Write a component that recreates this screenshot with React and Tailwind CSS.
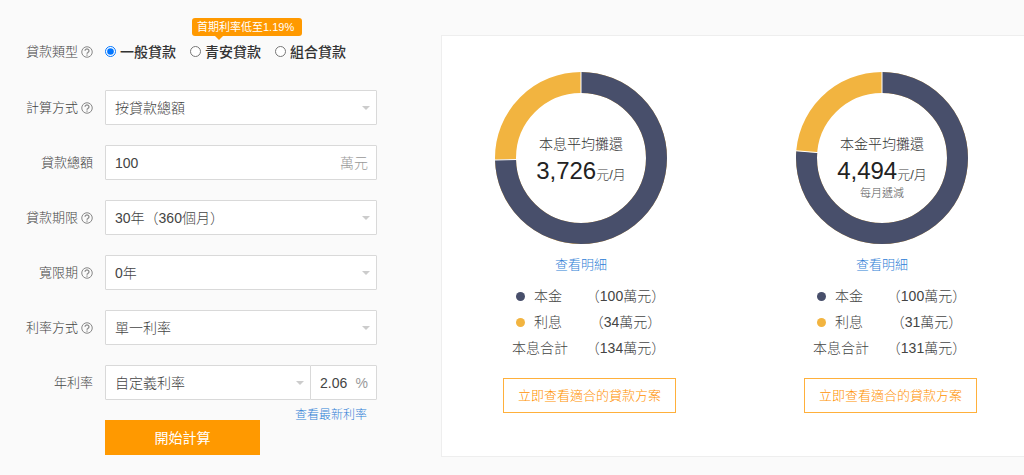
import { useState } from "react";

const loanTypes = [
  { value: "general", label: "一般貸款" },
  { value: "youth", label: "青安貸款", tip: "首期利率低至1.19%" },
  { value: "mixed", label: "組合貸款" },
];

const plans = [
  { title: "本息平均攤還", monthly: "3,726", principal: 100, interest: 34 },
  { title: "本金平均攤還", monthly: "4,494", note: "每月遞減", principal: 100, interest: 31 },
];

function HelpIcon() {
  return (
    <svg viewBox="0 0 24 24" className="h-3 w-3" fill="none" stroke="currentColor" aria-hidden="true">
      <circle cx="12" cy="12" r="10.5" strokeWidth="2" />
      <path d="M8 9.5a4 3.7 0 1 1 6.2 3.2C12.8 13.6 12 14 12 15.6" strokeWidth="2.4" />
      <path d="M12 17v2.4" strokeWidth="2.4" />
    </svg>
  );
}

function RowLabel({ htmlFor, text, help }) {
  return (
    <div className="flex w-[93px] shrink-0 items-center justify-end gap-[3px] text-[13px] text-[#444]">
      <label htmlFor={htmlFor}>{text}</label>
      {help && (
        <button type="button" aria-label={text + "說明"} className="text-[#888]">
          <HelpIcon />
        </button>
      )}
    </div>
  );
}

function Row({ id, text, help, children }) {
  return (
    <div className="flex h-[35px] items-stretch gap-3">
      <RowLabel htmlFor={id} text={text} help={help} />
      <div className="flex flex-1">{children}</div>
    </div>
  );
}

function SelectBox({ id, options }) {
  return (
    <div className="relative flex-1">
      <select
        id={id}
        className="h-full w-full appearance-none rounded-[1px] border border-[#d9d9d9] bg-white pl-[9px] pr-6 text-sm text-[#444] outline-none"
      >
        {options.map((option) => (
          <option key={option}>{option}</option>
        ))}
      </select>
      <span className="pointer-events-none absolute right-[7px] top-4 border-x-4 border-t-4 border-x-transparent border-t-[#ccc]" />
    </div>
  );
}

function NumberBox({ id, label, value, onChange, unit }) {
  return (
    <div className="flex h-full w-full items-center rounded-[1px] border border-[#d9d9d9] bg-white pr-2 text-sm">
      <input
        id={id}
        type="text"
        aria-label={label}
        value={value}
        onChange={(e) => onChange(e.target.value)}
        className="h-full w-full min-w-0 flex-1 pl-[9px] text-[#444] outline-none"
      />
      <span className="text-[#999]">{unit}</span>
    </div>
  );
}

function Donut({ principal, interest }) {
  const share = principal / (principal + interest);
  const angle = share * 2 * Math.PI;
  const point = (r, a) => `${86 + r * Math.sin(a)} ${86 - r * Math.cos(a)}`;

  return (
    <svg viewBox="0 0 172 172" className="h-[172px] w-[172px]" aria-hidden="true">
      <circle cx="86" cy="86" r="75.5" fill="none" stroke="#f2b440" strokeWidth="21" />
      <circle
        cx="86"
        cy="86"
        r="75.5"
        fill="none"
        stroke="#484f6b"
        strokeWidth="21"
        pathLength="100"
        strokeDasharray={`${share * 100} 100`}
        transform="rotate(-90 86 86)"
      />
      <path
        d={`M${point(64, 0)}L${point(87, 0)}M${point(64, angle)}L${point(87, angle)}`}
        stroke="#fff"
        strokeWidth="1"
      />
    </svg>
  );
}

function LegendRow({ color, name, amount }) {
  return (
    <tr className="h-[26px]">
      <th scope="row" className="w-[56px] p-0 text-left font-light">
        <span className="flex items-center gap-[9px]">
          {color && <span className={"ml-1 h-[9px] w-[9px] shrink-0 rounded-full " + color} />}
          <span className="whitespace-nowrap">{name}</span>
        </span>
      </th>
      <td className="whitespace-nowrap p-0 text-center">（{amount}萬元）</td>
    </tr>
  );
}

function PlanCard({ plan }) {
  return (
    <section className="w-[181px]">
      <div className="w-[172px]">
        <div className="relative">
          <Donut principal={plan.principal} interest={plan.interest} />
          <div className="absolute inset-0 pt-[62px] text-center">
            <h3 className="text-sm font-light leading-5 text-[#333]">{plan.title}</h3>
            <p className="h-[30px] whitespace-nowrap text-[13px] leading-[34px] text-[#444]">
              <span className="text-2xl leading-[34px] text-[#222]">{plan.monthly}</span>元/月
            </p>
            {plan.note && <p className="text-[11px] leading-[18px] text-[#555]">{plan.note}</p>}
          </div>
        </div>
        <a href="#detail" className="mt-[11px] block text-center text-[13px] leading-5 text-[#2f80d6]">
          查看明細
        </a>
      </div>
      <table className="ml-[17px] mt-2 w-[171px] border-collapse text-sm text-[#444]">
        <tbody>
          <LegendRow color="bg-[#484f6b]" name="本金" amount={plan.principal} />
          <LegendRow color="bg-[#f2b440]" name="利息" amount={plan.interest} />
          <LegendRow name="本息合計" amount={plan.principal + plan.interest} />
        </tbody>
      </table>
      <button
        type="button"
        className="ml-2 mt-[17px] h-[35px] w-[173px] whitespace-nowrap border border-[#ffb03b] text-[13px] text-[#ff9100]"
      >
        立即查看適合的貸款方案
      </button>
    </section>
  );
}

function App() {
  const [loanType, setLoanType] = useState("general");
  const [amount, setAmount] = useState("100");
  const [rate, setRate] = useState("2.06");

  return (
    <main className="flex min-h-screen items-start gap-16 bg-[#fafafa] font-['Liberation_Sans','Noto_Sans_CJK_TC',sans-serif] font-light">
      <form className="w-[377px] shrink-0 pt-[34px]" onSubmit={(e) => e.preventDefault()}>
        <div className="mb-[21px] flex h-[35px] items-center gap-3">
          <RowLabel text="貸款類型" help />
          <div className="flex gap-[14px]">
            {loanTypes.map((type) => (
              <label
                key={type.value}
                className="relative flex items-center gap-1 whitespace-nowrap text-sm font-medium text-[#333]"
              >
                <input
                  type="radio"
                  name="loanType"
                  className="h-[11px] w-[11px] accent-[#0075ff]"
                  checked={loanType === type.value}
                  onChange={() => setLoanType(type.value)}
                />
                {type.label}
                {type.tip && (
                  <span className="absolute bottom-full left-0.5 mb-1.5 h-[18px] w-[110px] rounded-[3px] bg-[#ff9900] pl-[5px] text-[11px] font-normal leading-[18px] text-white">
                    {type.tip}
                    <span className="absolute left-[23px] top-full border-x-4 border-t-4 border-x-transparent border-t-[#ff9900]" />
                  </span>
                )}
              </label>
            ))}
          </div>
        </div>

        <div className="flex flex-col gap-5">
          <Row id="method" text="計算方式" help>
            <SelectBox id="method" options={["按貸款總額", "按房屋總價"]} />
          </Row>
          <Row id="amount" text="貸款總額">
            <NumberBox id="amount" value={amount} onChange={setAmount} unit="萬元" />
          </Row>
          <Row id="term" text="貸款期限" help>
            <SelectBox id="term" options={["30年（360個月）", "20年（240個月）"]} />
          </Row>
          <Row id="grace" text="寬限期" help>
            <SelectBox id="grace" options={["0年", "1年", "2年", "3年"]} />
          </Row>
          <Row id="rateType" text="利率方式" help>
            <SelectBox id="rateType" options={["單一利率", "分段利率"]} />
          </Row>
          <Row id="rateSource" text="年利率">
            <SelectBox id="rateSource" options={["自定義利率"]} />
            <div className="-ml-px w-[67px]">
              <NumberBox id="rate" label="年利率" value={rate} onChange={setRate} unit="%" />
            </div>
          </Row>
        </div>

        <div className="ml-[105px] flex items-start justify-between pr-[10px]">
          <button type="submit" className="mt-5 h-[35px] w-[155px] bg-[#ff9900] text-sm font-normal text-white">
            開始計算
          </button>
          <a href="#rates" className="mt-[5px] text-xs leading-5 text-[#2f80d6]">
            查看最新利率
          </a>
        </div>
      </form>

      <div className="mt-[35px] flex flex-1 justify-between border border-r-0 border-[#eee] bg-white pb-[43px] pl-[53px] pr-[47px] pt-9">
        {plans.map((plan) => (
          <PlanCard key={plan.title} plan={plan} />
        ))}
      </div>
    </main>
  );
}

export default App;
